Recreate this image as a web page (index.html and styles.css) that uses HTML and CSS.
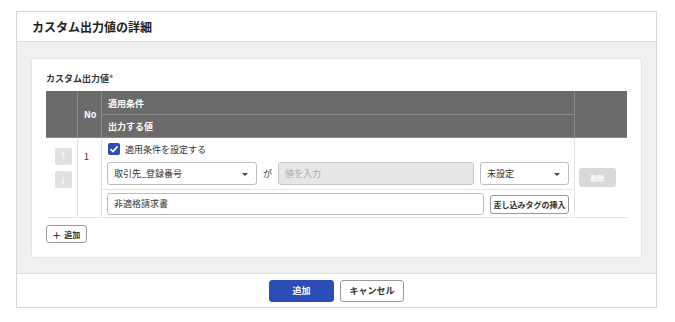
FILE: index.html
```html
<!DOCTYPE html>
<html lang="ja">
<head>
  <meta charset="UTF-8">
  <title>カスタム出力値の詳細</title>
  <link rel="stylesheet" href="styles.css">
</head>
<body>

  <div class="panel">
    <div class="panel-header">カスタム出力値の詳細</div>

    <div class="panel-body">
      <div class="card">
        <div class="field-label">カスタム出力値<span class="required">*</span></div>

        <table class="value-table">
          <colgroup>
            <col class="col-move">
            <col class="col-no">
            <col class="col-main">
            <col class="col-del">
          </colgroup>
          <thead>
            <tr>
              <th rowspan="2"></th>
              <th rowspan="2">No</th>
              <th>適用条件</th>
              <th class="th-del" rowspan="2"></th>
            </tr>
            <tr>
              <th>出力する値</th>
            </tr>
          </thead>
          <tbody>
            <tr>
              <td class="td-move">
                <div class="move-buttons">
                  <button class="move-btn">&#8593;</button>
                  <button class="move-btn">&#8595;</button>
                </div>
              </td>
              <td class="td-no">1</td>
              <td>
                <div class="condition-block">
                  <label class="check-line">
                    <span class="checkbox">
                      <svg width="10" height="10" viewBox="0 0 10 10"><path d="M1.5 5.2 L4 7.6 L8.6 2.4" fill="none" stroke="#fff" stroke-width="1.6"/></svg>
                    </span>
                    適用条件を設定する
                  </label>
                  <div class="condition-row">
                    <div class="select field-key">取引先_登録番号<span class="caret"></span></div>
                    <span class="ga">が</span>
                    <div class="input disabled field-value">値を入力</div>
                    <div class="select field-op">未設定<span class="caret"></span></div>
                  </div>
                </div>
                <div class="output-block">
                  <div class="input field-output">非適格請求書</div>
                  <button class="tag-btn">差し込みタグの挿入</button>
                </div>
              </td>
              <td class="td-del">
                <button class="delete-btn">削除</button>
              </td>
            </tr>
          </tbody>
        </table>

        <button class="add-row-btn"><span class="plus">+</span> 追加</button>
      </div>
    </div>

    <div class="panel-footer">
      <button class="primary-btn">追加</button>
      <button class="cancel-btn">キャンセル</button>
    </div>
  </div>

</body>
</html>
```

FILE: styles.css
```css
body {
  margin: 0;
  padding: 11px 0 0 16px;
  font-family: "Noto Sans CJK JP", "Noto Sans", sans-serif;
  background: #fff;
  color: #333;
}

button {
  font-family: inherit;
  cursor: pointer;
}

.panel {
  width: 639px;
  border: 1px solid #d6d6d6;
}

.panel-header {
  height: 29px;
  line-height: 29px;
  padding-left: 15px;
  font-size: 12px;
  font-weight: bold;
  color: #222;
  border-bottom: 1px solid #dcdcdc;
}

.panel-body {
  background: #f0f0f0;
  padding: 16px 14px 15px 14px;
  border-bottom: 1px solid #dcdcdc;
}

.card {
  background: #fff;
  border: 1px solid #e4e4e4;
  border-radius: 3px;
  padding: 12px 14px 14px 14px;
}

.field-label {
  font-size: 9px;
  font-weight: bold;
  line-height: 16px;
  height: 16px;
  margin-bottom: 4px;
  color: #333;
}

.required {
  color: #d0314a;
}

/* table */
.value-table {
  width: 581px;
  table-layout: fixed;
  border-collapse: collapse;
  font-size: 9px;
}

.col-move { width: 31px; }
.col-no { width: 24px; }
.col-del { width: 52px; }

.value-table th {
  background: #6b6b6b;
  color: #fff;
  font-weight: bold;
  text-align: left;
  height: 22px;
  padding: 0 6px;
  border: 1px solid #8a8a8a;
  border-top: none;
}

.value-table thead tr:first-child th {
  border-top: 1px solid #6b6b6b;
}

.value-table thead tr:first-child th:first-child {
  border-left: 1px solid #6b6b6b;
}

.value-table th.th-del {
  border-right: 1px solid #6b6b6b;
}

.value-table td {
  border: 1px solid #e2e2e2;
  border-top: none;
  vertical-align: top;
  padding: 0;
}

.value-table td.td-move {
  border-left: none;
}

.value-table td.td-no {
  padding: 12px 0 0 6px;
}

.value-table td.td-del {
  border-right: none;
  vertical-align: middle;
}

.move-buttons {
  display: flex;
  flex-direction: column;
  gap: 6px;
  padding: 10px 0 0 8px;
}

.move-btn {
  width: 17px;
  height: 17px;
  padding: 0;
  border: none;
  border-radius: 2px;
  background: #e0e0e0;
  color: #fff;
  font-size: 9px;
  line-height: 17px;
}

.condition-block {
  padding: 2px 5px 4px 5px;
}

.check-line {
  display: flex;
  align-items: center;
  gap: 5px;
  height: 18px;
  font-size: 9px;
  padding-left: 1px;
}

.checkbox {
  display: flex;
  align-items: center;
  justify-content: center;
  width: 12px;
  height: 12px;
  border-radius: 2px;
  background: #2c4cb8;
}

.condition-row {
  display: flex;
  align-items: center;
  margin-top: 4px;
}

.select, .input {
  box-sizing: border-box;
  position: relative;
  height: 23px;
  line-height: 21px;
  border: 1px solid #bdbdbd;
  border-radius: 3px;
  padding: 0 6px;
  font-size: 9px;
  color: #333;
  background: #fff;
}

.caret {
  position: absolute;
  right: 8px;
  top: 10px;
  border-left: 3px solid transparent;
  border-right: 3px solid transparent;
  border-top: 3px solid #444;
}

.field-key {
  width: 150px;
}

.ga {
  width: 21px;
  text-align: center;
}

.field-value {
  width: 196px;
}

.input.disabled {
  background: #e6e6e6;
  border-color: #c8c8c8;
  color: #aaa;
}

.field-op {
  width: 89px;
  margin-left: 6px;
}

.output-block {
  display: flex;
  align-items: center;
  gap: 6px;
  border-top: 1px solid #e5e5e5;
  padding: 3px 5px 2px 5px;
}

.field-output {
  width: 377px;
  height: 22px;
  line-height: 20px;
}

.tag-btn {
  width: 79px;
  height: 19px;
  padding: 0;
  border: 1px solid #999;
  border-radius: 3px;
  background: #fff;
  font-size: 8px;
  font-weight: bold;
  color: #333;
  white-space: nowrap;
}

.delete-btn {
  width: 37px;
  height: 19px;
  margin-left: 4px;
  padding: 0;
  border: none;
  border-radius: 3px;
  background: #d9d9d9;
  color: #fff;
  font-size: 7px;
  font-weight: bold;
}

.add-row-btn {
  display: flex;
  align-items: center;
  gap: 4px;
  margin-top: 7px;
  height: 18px;
  padding: 0 6px;
  border: 1px solid #999;
  border-radius: 3px;
  background: #fff;
  font-size: 8px;
  font-weight: bold;
  color: #333;
}

.plus {
  font-size: 13px;
  font-weight: normal;
  line-height: 1;
}

/* footer */
.panel-footer {
  display: flex;
  justify-content: center;
  align-items: center;
  gap: 6px;
  height: 33px;
}

.primary-btn, .cancel-btn {
  width: 65px;
  height: 22px;
  padding: 0;
  border-radius: 3px;
  font-size: 9px;
  font-weight: bold;
}

.primary-btn {
  background: #2c4cb8;
  border: 1px solid #2c4cb8;
  color: #fff;
}

.cancel-btn {
  width: 64px;
  background: #fff;
  border: 1px solid #999;
  color: #333;
}
```
